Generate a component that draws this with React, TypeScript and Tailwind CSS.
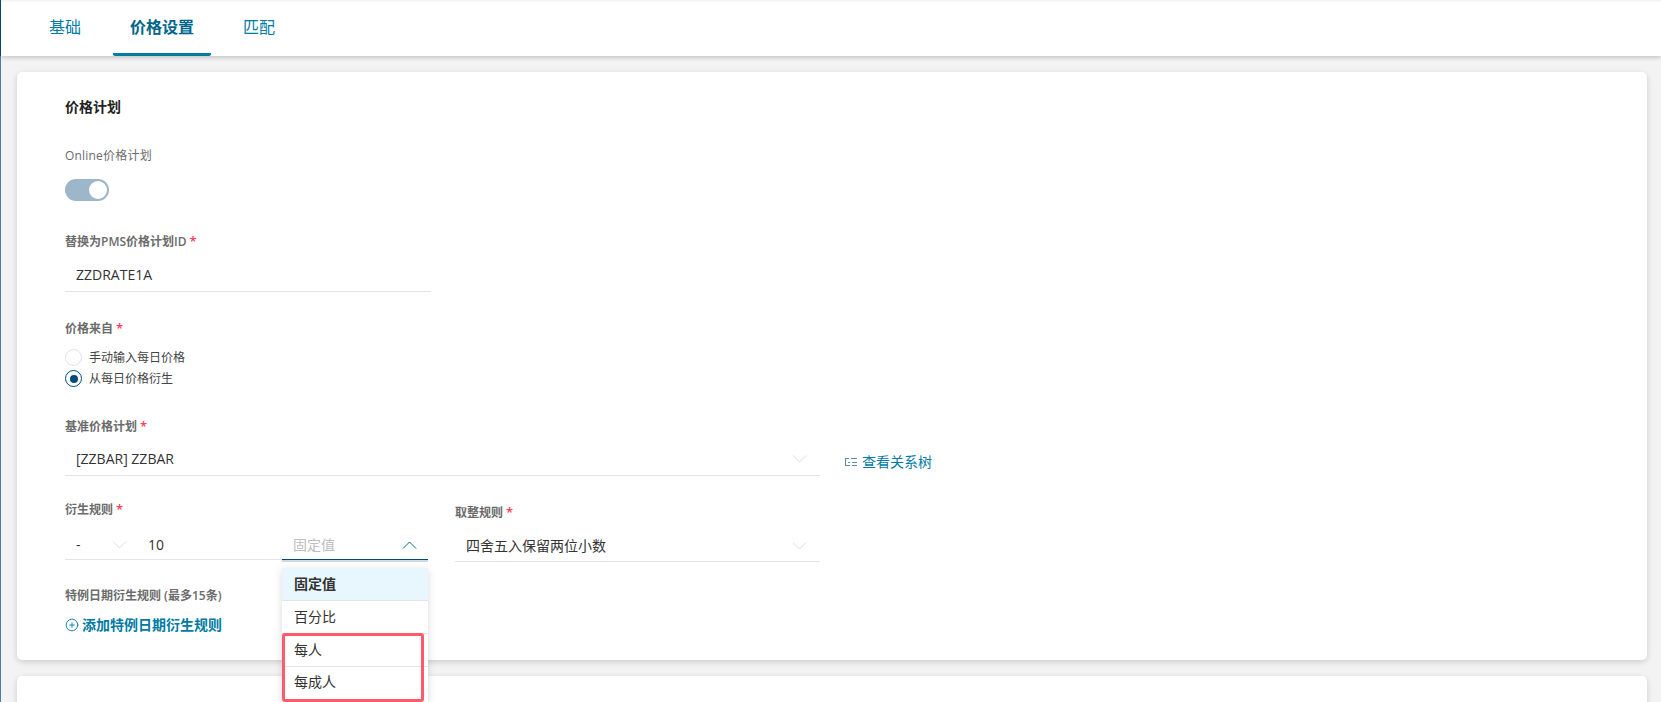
import { CirclePlus } from 'lucide-react';

const font = '[font-family:"Open_Sans","Noto_Sans_CJK_SC",sans-serif]';

const Chevron = ({ up = false, className = '' }: { up?: boolean; className?: string }) => (
  <svg width="15" height="8" viewBox="0 0 15 8" fill="none" className={className}>
    <path d={up ? 'M1 7.5 7.5 1l6.5 6.5' : 'M1 .5 7.5 7 14 .5'} stroke="currentColor" strokeWidth="1" />
  </svg>
);

const Label = ({ text, required = false }: { text: string; required?: boolean }) => (
  <div className="h-[18px] text-xs leading-[20px] font-semibold text-[#6b6b6b]">
    {text}
    {required && <span className="ml-[3px] text-[13px] text-[#ff3b55]">*</span>}
  </div>
);

const Radio = ({ text, checked = false }: { text: string; checked?: boolean }) => (
  <div className="flex h-[21px] items-center gap-[7px] text-xs text-[#444444]">
    {checked ? (
      <span className="flex size-[17px] items-center justify-center rounded-full border-[1.5px] border-[#004b75]">
        <span className="size-[8px] rounded-full bg-[#004b75]" />
      </span>
    ) : (
      <span className="size-[17px] rounded-full border-[1.5px] border-[#e2e2e2]" />
    )}
    {text}
  </div>
);

const Dropdown = () => (
  <div className="absolute top-[8px] left-0 z-10 w-[146px] bg-white text-sm text-[#333333] shadow-[0_2px_8px_rgba(0,0,0,0.15)]">
    <div className="flex h-[33px] items-center border-b border-[#e4e4e4] bg-[#e8f7fd] px-[12px] font-semibold">固定值</div>
    <div className="flex h-[33px] items-center border-b border-[#e4e4e4] px-[12px]">百分比</div>
    <div className="flex h-[33px] items-center border-b border-[#e4e4e4] px-[12px]">每人</div>
    <div className="flex h-[36px] items-center px-[12px] pb-[6px]">每成人</div>
    <div className="absolute top-[65px] left-0 h-[69px] w-[142px] rounded-[3px] border-[3px] border-[#ff5a6e]" />
  </div>
);

export default function App() {
  return (
    <div className={`flex h-[702px] w-full overflow-hidden bg-[#f3f3f3] ${font}`}>
      <div className="flex w-px shrink-0 flex-col">
        <div className="h-[56px] bg-[#004b75]" />
        <div className="flex-1 bg-[#4a80a8]" />
      </div>
      <div className="flex min-w-0 flex-1 flex-col">
        <div className="relative z-10 flex h-[56px] shrink-0 items-stretch gap-[15px] bg-white pl-[31px] text-base text-[#007ba3] shadow-[0_2px_4px_rgba(0,0,0,0.18),inset_0_3px_3px_-2px_rgba(0,0,0,0.08)]">
          <div className="flex items-center px-[17px] pb-[3px]">基础</div>
          <div className="flex items-center rounded-b-[2px] border-b-[3px] border-[#007ba3] px-[17px] font-semibold text-[#00668c]">价格设置</div>
          <div className="flex items-center px-[17px] pb-[3px]">匹配</div>
        </div>
        <div className="flex flex-col gap-[16px] pt-[16px] pr-[14px] pl-[16px]">
          <div className="rounded-[5px] bg-white pt-[25px] pb-[25px] pl-[48px] shadow-[0_2px_6px_rgba(0,0,0,0.16)]">
            <div className="h-5 text-sm leading-5 font-bold text-[#222222]">价格计划</div>

            <div className="mt-[28px] h-[18px] text-xs leading-[21px] tracking-[0.2px] text-[#6b6b6b]">Online价格计划</div>
            <div className="mt-[16px] flex h-[22px] w-[44px] items-center justify-end rounded-full bg-[#9db6c9] pr-[2px]">
              <span className="size-[18px] rounded-full bg-white" />
            </div>

            <div className="mt-[30px]"><Label text="替换为PMS价格计划ID" required /></div>
            <div className="h-[43px] w-[366px] border-b border-[#e4e4e4] pt-[10px] pl-[11px] text-sm leading-[32px] text-[#333333]">ZZDRATE1A</div>

            <div className="mt-[26px]"><Label text="价格来自" required /></div>
            <div className="mt-[11px]">
              <Radio text="手动输入每日价格" />
              <Radio text="从每日价格衍生" checked />
            </div>

            <div className="mt-[27px]"><Label text="基准价格计划" required /></div>
            <div className="flex items-end">
              <div className="flex h-[42px] w-[755px] items-center justify-between border-b border-[#e4e4e4] pt-[9px] pr-[13px] pl-[11px] text-sm text-[#333333]">
                [ZZBAR] ZZBAR
                <Chevron className="text-[#dcdcdc]" />
              </div>
              <div className="ml-[25px] flex h-[28px] items-center gap-[5px] text-sm text-[#007ba3]">
                <svg width="12" height="10" viewBox="0 0 12 10" fill="none" stroke="#5f8aa3" strokeWidth="1">
                  <path d="M.5 1v8M0 1.5h4M6 1.5h6M3 5.5h2M7 5.5h5M0 8.5h5M7 8.5h5" />
                </svg>
                查看关系树
              </div>
            </div>

            <div className="mt-[23px] flex gap-[27px]">
              <div className="w-[363px]">
                <Label text="衍生规则" required />
                <div className="flex h-[43px] items-center pt-[10px] text-sm text-[#333333]">
                  <div className="flex h-full w-[217px] items-center border-b border-[#e4e4e4] pt-[4px] pl-[11px]">
                    <span className="w-[36px]">-</span>
                    <Chevron className="text-[#dcdcdc]" />
                    <span className="ml-[21px]">10</span>
                  </div>
                  <div className="relative h-full w-[146px]">
                    <div className="flex h-full items-center justify-between border-b border-[#004b75] pt-[4px] pr-[11px] pl-[11px] text-[#bdbdbd] shadow-[0_2px_0_rgba(0,75,117,0.2)]">
                      固定值
                      <Chevron up className="text-[#00668c]" />
                    </div>
                    <div className="relative">
                      <Dropdown />
                    </div>
                  </div>
                </div>
              </div>
              <div className="w-[365px] pt-[3px]">
                <Label text="取整规则" required />
                <div className="flex h-[42px] items-center justify-between border-b border-[#e4e4e4] pt-[10px] pr-[13px] pl-[11px] text-sm text-[#333333]">
                  四舍五入保留两位小数
                  <Chevron className="text-[#dcdcdc]" />
                </div>
              </div>
            </div>

            <div className="mt-[24px]"><Label text="特例日期衍生规则 (最多15条)" /></div>
            <div className="mt-[11px] flex h-5 items-center gap-[3px] text-sm font-semibold text-[#007ba3]">
              <CirclePlus size={14} strokeWidth={1.5} />
              添加特例日期衍生规则
            </div>
          </div>
          <div className="h-[120px] rounded-[5px] bg-white shadow-[0_2px_6px_rgba(0,0,0,0.16)]" />
        </div>
      </div>
    </div>
  );
}
